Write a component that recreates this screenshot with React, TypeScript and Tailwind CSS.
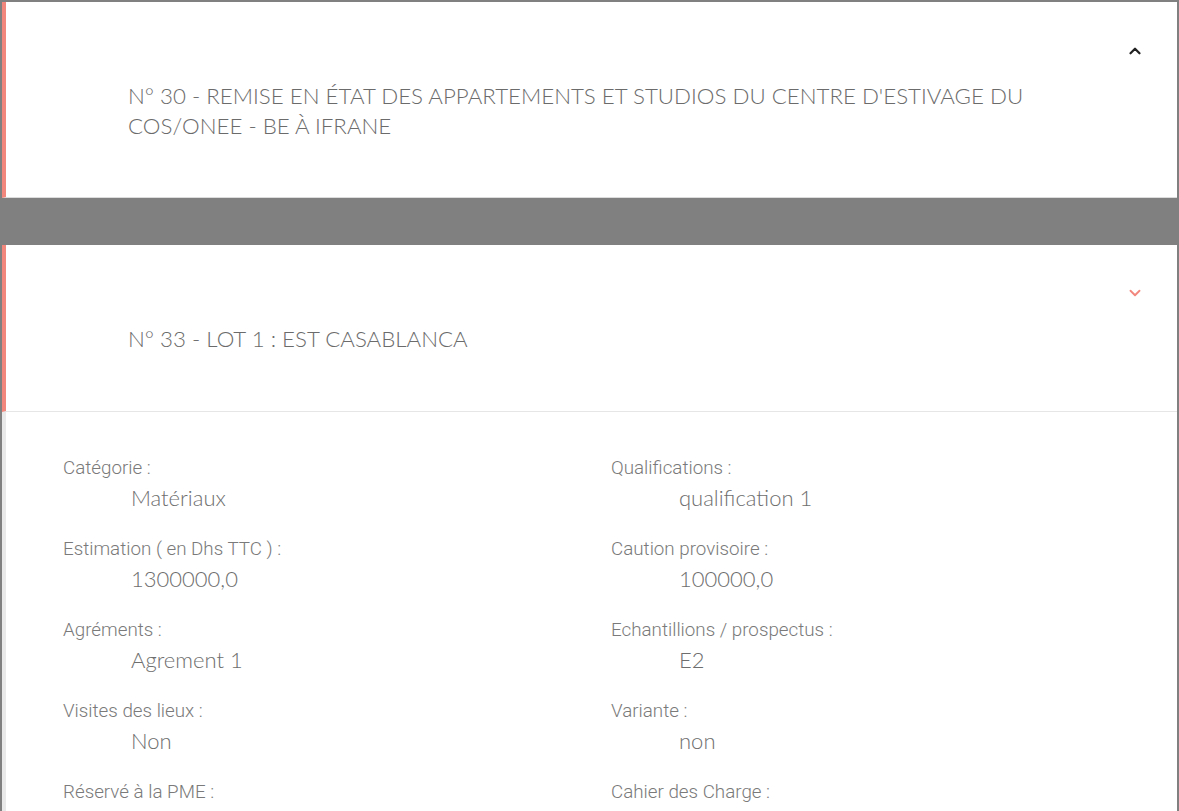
import { ChevronDown, ChevronUp } from 'lucide-react'

const fields: [string, string][][] = [
  [
    ['Catégorie :', 'Matériaux'],
    ['Qualifications :', 'qualification 1'],
  ],
  [
    ['Estimation ( en Dhs TTC ) :', '1300000,0'],
    ['Caution provisoire :', '100000,0'],
  ],
  [
    ['Agréments :', 'Agrement 1'],
    ['Echantillions / prospectus :', 'E2'],
  ],
  [
    ['Visites des lieux :', 'Non'],
    ['Variante :', 'non'],
  ],
  [
    ['Réservé à la PME :', ''],
    ['Cahier des Charge :', ''],
  ],
]

function Field({ label, value }: { label: string; value: string }) {
  return (
    <div className="flex flex-col">
      <span className="font-['Roboto',sans-serif] text-[18.8px] leading-[24px] font-light text-[#7a7a7a]">
        {label}
      </span>
      <span className="mt-[4px] ml-[68px] min-h-[28px] font-['Lato',sans-serif] text-[22px] leading-[28px] font-light text-[#6e6e6e]">
        {value}
      </span>
    </div>
  )
}

export default function App() {
  return (
    <div className="flex h-[811px] flex-col overflow-hidden bg-[#808080] pt-[2px] pr-[2px] pl-[2px]">
      <section className="border-b border-[#dcdcdc] border-l-4 border-l-[#f2877e] bg-white">
        <div className="flex justify-end pt-[40px] pr-[33px]">
          <ChevronUp size={18} strokeWidth={3} className="text-[#222]" />
        </div>
        <h3 className="mt-[21px] mr-[120px] ml-[122px] pb-[56px] font-['Lato',sans-serif] text-[22.3px] leading-[30px] font-light uppercase text-[#6b6b6b]">
          N° 30 - Remise en état des appartements et studios du centre d'estivage du COS/ONEE - BE à Ifrane
        </h3>
      </section>

      <div className="h-[47px] shrink-0" />

      <section className="flex-1 border-l-4 border-l-[#e9e9e9] bg-white">
        <div className="-ml-[4px] border-b border-[#e6e6e6] border-l-4 border-l-[#f2877e]">
          <div className="flex justify-end pt-[39px] pr-[33px]">
            <ChevronDown size={18} strokeWidth={2.5} className="text-[#f2877e]" />
          </div>
          <h3 className="mt-[22px] ml-[122px] pb-[57px] font-['Lato',sans-serif] text-[22.3px] leading-[30px] font-light uppercase text-[#6b6b6b]">
            N° 33 - Lot 1 : Est Casablanca
          </h3>
        </div>
        <div className="flex flex-col gap-[25px] pt-[44px] pl-[57px]">
          {fields.map((row, i) => (
            <div key={i} className="grid grid-cols-[548px_1fr]">
              <Field label={row[0][0]} value={row[0][1]} />
              <Field label={row[1][0]} value={row[1][1]} />
            </div>
          ))}
        </div>
      </section>
    </div>
  )
}
